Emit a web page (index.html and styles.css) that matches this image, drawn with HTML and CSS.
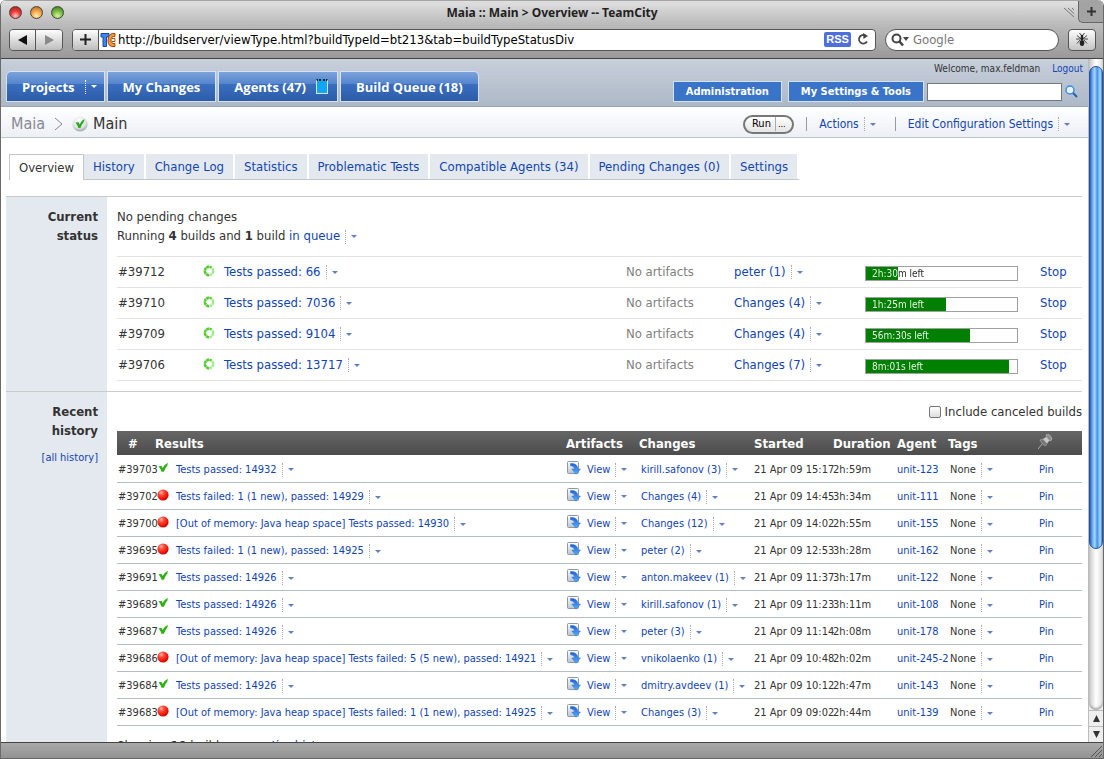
FILE: index.html
```
<!DOCTYPE html>
<html lang="en">
<head>
<meta charset="utf-8">
<title>Maia :: Main &gt; Overview -- TeamCity</title>
<link rel="stylesheet" href="styles.css">
</head>
<body>
<svg class="sprite" width="0" height="0" aria-hidden="true">
  <defs>
    <radialGradient id="red-ball" cx="35%" cy="28%" r="75%"><stop offset="0" stop-color="#ffb3a6"/><stop offset=".35" stop-color="#ff4a38"/><stop offset=".75" stop-color="#ee1408"/><stop offset="1" stop-color="#b80d04"/></radialGradient>
    <linearGradient id="blue-arrow" x1="0" y1="0" x2="0" y2="1"><stop offset="0" stop-color="#1c5fd0"/><stop offset="1" stop-color="#58b4ff"/></linearGradient>
    <linearGradient id="sheet" x1="0" y1="0" x2="0" y2="1"><stop offset="0" stop-color="#ffffff"/><stop offset="1" stop-color="#b9c3d2"/></linearGradient>
    <radialGradient id="badge" cx="45%" cy="30%" r="75%"><stop offset="0" stop-color="#ffffff"/><stop offset=".6" stop-color="#dfe4e4"/><stop offset="1" stop-color="#8f9a9a"/></radialGradient>
  </defs>
  <symbol id="ok" viewBox="0 0 12 12"><path d="M1.500 4.300 4.600 4 5.600 6Q7.400 2.600 10.800 .8L10.400 3.400Q8 6 6.900 9.800L4.600 9.800Q3.600 6.800 1.500 4.300Z" fill="#2bb410"/></symbol>
  <symbol id="fail" viewBox="0 0 12 12"><circle cx="6" cy="6" r="5.600" fill="url(#red-ball)"/></symbol>
  <symbol id="spin" viewBox="0 0 12 12"><circle cx="6" cy="6" r="4.200" fill="none" stroke="#a3e78f" stroke-width="2.400" stroke-dasharray="2.800 .5"/><path d="M6 10.200A4.200 4.200 0 1 1 8.400 2.500" fill="none" stroke="#55cc33" stroke-width="2.400" stroke-dasharray="2.800 .5"/></symbol>
  <symbol id="art" viewBox="0 0 14 14"><rect x=".5" y=".5" width="11" height="12" rx="1" fill="url(#sheet)" stroke="#8c97a8"/><path d="M3.500 2.500Q10.500 2 10.800 8H13.500L9 13.200 4.800 8H7.500Q7.500 5 3.500 4.800Z" fill="url(#blue-arrow)" stroke="#2b6bd0" stroke-width=".5"/></symbol>
</svg>
<div class="window">
  <header class="titlebar">
    <div class="lights"><i class="light red"></i><i class="light amber"></i><i class="light green"></i></div>
    <div class="window-title">Maia :: Main &gt; Overview -- TeamCity</div>
    <div class="tab-tools">
      <svg width="11" height="11" viewBox="0 0 11 11"><path d="M0 1 10 10M4 1 10 6.500M8 1 10 3" stroke="#777" fill="none"/></svg>
      <button class="new-tab" aria-label="New tab"><svg width="9" height="9" viewBox="0 0 9 9"><path d="M4.500 0V9M0 4.500H9" stroke="#333" stroke-width="2"/></svg></button>
    </div>
  </header>
  <div class="toolbar">
    <div class="nav-buttons">
      <button aria-label="Back"><svg width="9" height="10" viewBox="0 0 9 10"><path d="M9 0V10L0 5Z" fill="#111"/></svg></button>
      <button aria-label="Forward"><svg width="9" height="10" viewBox="0 0 9 10"><path d="M0 0V10L9 5Z" fill="#8a8a8a"/></svg></button>
    </div>
    <div class="address">
      <button class="add" aria-label="Add bookmark"><svg width="11" height="11" viewBox="0 0 11 11"><path d="M5.500 0V11M0 5.500H11" stroke="#222" stroke-width="2"/></svg></button>
      <svg class="site" width="16" height="16" viewBox="0 0 16 16"><path d="M1 1.500H9V5H6.500V14.500H3V5H1Z" fill="#3d86ee" stroke="#164aa8"/><path d="M15 4.500V1.500Q8.500.5 8 8T15 14.500V11.500Q11 12 11 8T15 4.500Z" fill="#f79a35" stroke="#a34810"/><path d="M12 6.500H15V9.500H12" fill="none" stroke="#b04d12"/></svg>
      <input class="url" type="text" aria-label="Address" value="http://buildserver/viewType.html?buildTypeId=bt213&amp;tab=buildTypeStatusDiv">
      <button class="rss">RSS</button>
      <button class="reload" aria-label="Reload"><svg width="12" height="13" viewBox="0 0 12 13"><path d="M8.500 2.500A4.300 4.300 0 1 0 10 8.500" fill="none" stroke="#444" stroke-width="1.800"/><path d="M6 0 11 3 6.500 6Z" fill="#444"/></svg></button>
    </div>
    <div class="web-search">
      <svg width="18" height="14" viewBox="0 0 18 14"><circle cx="5.500" cy="5.500" r="4" fill="none" stroke="#444" stroke-width="2"/><path d="M8.500 8.500 12 12.500" stroke="#444" stroke-width="2.500"/><path d="M12 4H18L15 8Z" fill="#444"/></svg>
      <input type="text" aria-label="Web search" placeholder="Google">
    </div>
    <button class="bug" aria-label="Report bug"><svg width="14" height="14" viewBox="0 0 14 14"><ellipse cx="7" cy="10" rx="2.300" ry="3" fill="#222"/><circle cx="7" cy="5.500" r="1.800" fill="#222"/><circle cx="7" cy="3" r="1.300" fill="#222"/><path d="M6 2 4.500 0M8 2 9.500 0M5 5 2 2.500M9 5 12 2.500M5 6H1M9 6H13M5 7 2 10.500M9 7 12 10.500" stroke="#333" stroke-width=".9"/></svg></button>
  </div>

  <div class="viewport">
    <div class="page">
      <div class="masthead">
        <nav class="main-tabs">
          <a href="#">Projects <span class="caret light-caret"></span></a>
          <a href="#">My Changes</a>
          <a href="#">Agents (47) <span class="agent-meter"></span></a>
          <a href="#">Build Queue (18)</a>
        </nav>
        <div class="account">
          <div class="welcome"><span>Welcome, max.feldman</span><a href="#">Logout</a></div>
          <div class="tools">
            <a class="tool" href="#">Administration</a>
            <a class="tool" href="#">My Settings &amp; Tools</a>
            <input type="text" aria-label="Search builds">
            <button class="go" aria-label="Search"><svg width="13" height="13" viewBox="0 0 13 13"><circle cx="5" cy="5" r="4" fill="#e4f2ff" stroke="#3a8de0" stroke-width="1.500"/><path d="M8 8 12 12" stroke="#2b5fa8" stroke-width="2"/></svg></button>
          </div>
        </div>
      </div>

      <div class="crumbs">
        <a class="parent" href="#">Maia</a>
        <svg width="9" height="14" viewBox="0 0 9 14"><path d="M1 1 8 7 1 13" fill="none" stroke="#888"/></svg>
        <svg width="16" height="16" viewBox="0 0 16 16"><circle cx="8" cy="8" r="7.600" fill="url(#badge)"/><path d="M3.500 6.500 6.500 6.200 7.500 8.600Q9.500 4.500 12.500 3L12 5.500Q9.500 8.500 8.500 12H6.500Q5.500 9 3.500 6.500Z" fill="#25a810"/></svg>
        <h1>Main</h1>
        <div class="actions">
          <div class="run"><button>Run</button><button class="more">...</button></div>
          <span class="sep"></span>
          <span class="drop"><a href="#">Actions</a><button class="caret" aria-label="Actions menu"></button></span>
          <span class="sep"></span>
          <span class="drop"><a href="#">Edit Configuration Settings</a><button class="caret" aria-label="Settings menu"></button></span>
        </div>
      </div>

      <nav class="tabs">
        <a class="current" href="#">Overview</a><a href="#">History</a><a href="#">Change Log</a><a href="#">Statistics</a><a href="#">Problematic Tests</a><a href="#">Compatible Agents (34)</a><a href="#">Pending Changes (0)</a><a href="#">Settings</a>
      </nav>

      <section class="block">
        <div class="side"><h2>Current status</h2></div>
        <div class="body">
          <p>No pending changes</p>
          <p>Running <b>4</b> builds and <b>1</b> build <a href="#">in queue</a><button class="caret" aria-label="Queue"></button></p>
          <table class="running">
            <colgroup><col class="r-num"><col class="r-icon"><col><col class="r-art"><col class="r-chg"><col class="r-bar"><col class="r-stop"></colgroup>
            <tbody>
            <tr><td>#39712</td><td><svg class="ico"><use href="#spin"/></svg></td><td><a href="#">Tests passed: 66</a><button class="caret" aria-label="More"></button></td><td class="none">No artifacts</td><td><a href="#">peter (1)</a><button class="caret" aria-label="More"></button></td><td class="progress"><div class="bar" style="--done:21%"><span>2h:30m left</span></div></td><td><a href="#">Stop</a></td></tr>
            <tr><td>#39710</td><td><svg class="ico"><use href="#spin"/></svg></td><td><a href="#">Tests passed: 7036</a><button class="caret" aria-label="More"></button></td><td class="none">No artifacts</td><td><a href="#">Changes (4)</a><button class="caret" aria-label="More"></button></td><td class="progress"><div class="bar" style="--done:53%"><span>1h:25m left</span></div></td><td><a href="#">Stop</a></td></tr>
            <tr><td>#39709</td><td><svg class="ico"><use href="#spin"/></svg></td><td><a href="#">Tests passed: 9104</a><button class="caret" aria-label="More"></button></td><td class="none">No artifacts</td><td><a href="#">Changes (4)</a><button class="caret" aria-label="More"></button></td><td class="progress"><div class="bar" style="--done:69%"><span>56m:30s left</span></div></td><td><a href="#">Stop</a></td></tr>
            <tr><td>#39706</td><td><svg class="ico"><use href="#spin"/></svg></td><td><a href="#">Tests passed: 13717</a><button class="caret" aria-label="More"></button></td><td class="none">No artifacts</td><td><a href="#">Changes (7)</a><button class="caret" aria-label="More"></button></td><td class="progress"><div class="bar" style="--done:95%"><span>8m:01s left</span></div></td><td><a href="#">Stop</a></td></tr>
            </tbody>
          </table>
        </div>
      </section>

      <section class="block">
        <div class="side"><h2>Recent history</h2><a href="#">[all history]</a></div>
        <div class="body">
          <label class="canceled"><input type="checkbox">Include canceled builds</label>
          <table class="history">
            <colgroup><col class="h-num"><col><col class="h-art"><col class="h-chg"><col class="h-start"><col class="h-dur"><col class="h-agent"><col class="h-tags"><col class="h-pin"></colgroup>
            <thead><tr><th class="num">#</th><th>Results</th><th>Artifacts</th><th>Changes</th><th>Started</th><th>Duration</th><th>Agent</th><th>Tags</th><th><svg width="15" height="15" viewBox="0 0 15 15"><path d="M0 15 5 9" stroke="#aaa" stroke-width="1"/><path d="M2 6 5 5 9 9.500 7.500 12Q4 11 2 6Z" fill="#777" stroke="#aaa" stroke-width=".6"/><path d="M5 5 8 3 11.500 6.500 9 9.500Z" fill="#c9c9c9"/><path d="M8 1 9.500 0Q13 1 14 5L12.500 7Q9 6 8 1Z" fill="#8b8b8b" stroke="#ccc" stroke-width=".6"/></svg></th></tr></thead>
            <tbody>
            <tr><td>#39703</td><td><svg class="ico"><use href="#ok"/></svg><a href="#">Tests passed: 14932</a><button class="caret" aria-label="More"></button></td><td><svg class="art"><use href="#art"/></svg><a href="#">View</a><button class="caret" aria-label="More"></button></td><td><a href="#">kirill.safonov (3)</a><button class="caret" aria-label="More"></button></td><td>21 Apr 09 15:17</td><td>2h:59m</td><td><a href="#">unit-123</a></td><td>None<button class="caret" aria-label="More"></button></td><td><a href="#">Pin</a></td></tr>
            <tr><td>#39702</td><td><svg class="ico"><use href="#fail"/></svg><a href="#">Tests failed: 1 (1 new), passed: 14929</a><button class="caret" aria-label="More"></button></td><td><svg class="art"><use href="#art"/></svg><a href="#">View</a><button class="caret" aria-label="More"></button></td><td><a href="#">Changes (4)</a><button class="caret" aria-label="More"></button></td><td>21 Apr 09 14:45</td><td>3h:34m</td><td><a href="#">unit-111</a></td><td>None<button class="caret" aria-label="More"></button></td><td><a href="#">Pin</a></td></tr>
            <tr><td>#39700</td><td><svg class="ico"><use href="#fail"/></svg><a href="#">[Out of memory: Java heap space] Tests passed: 14930</a><button class="caret" aria-label="More"></button></td><td><svg class="art"><use href="#art"/></svg><a href="#">View</a><button class="caret" aria-label="More"></button></td><td><a href="#">Changes (12)</a><button class="caret" aria-label="More"></button></td><td>21 Apr 09 14:02</td><td>2h:55m</td><td><a href="#">unit-155</a></td><td>None<button class="caret" aria-label="More"></button></td><td><a href="#">Pin</a></td></tr>
            <tr><td>#39695</td><td><svg class="ico"><use href="#fail"/></svg><a href="#">Tests failed: 1 (1 new), passed: 14925</a><button class="caret" aria-label="More"></button></td><td><svg class="art"><use href="#art"/></svg><a href="#">View</a><button class="caret" aria-label="More"></button></td><td><a href="#">peter (2)</a><button class="caret" aria-label="More"></button></td><td>21 Apr 09 12:53</td><td>3h:28m</td><td><a href="#">unit-162</a></td><td>None<button class="caret" aria-label="More"></button></td><td><a href="#">Pin</a></td></tr>
            <tr><td>#39691</td><td><svg class="ico"><use href="#ok"/></svg><a href="#">Tests passed: 14926</a><button class="caret" aria-label="More"></button></td><td><svg class="art"><use href="#art"/></svg><a href="#">View</a><button class="caret" aria-label="More"></button></td><td><a href="#">anton.makeev (1)</a><button class="caret" aria-label="More"></button></td><td>21 Apr 09 11:37</td><td>3h:17m</td><td><a href="#">unit-122</a></td><td>None<button class="caret" aria-label="More"></button></td><td><a href="#">Pin</a></td></tr>
            <tr><td>#39689</td><td><svg class="ico"><use href="#ok"/></svg><a href="#">Tests passed: 14926</a><button class="caret" aria-label="More"></button></td><td><svg class="art"><use href="#art"/></svg><a href="#">View</a><button class="caret" aria-label="More"></button></td><td><a href="#">kirill.safonov (1)</a><button class="caret" aria-label="More"></button></td><td>21 Apr 09 11:23</td><td>3h:11m</td><td><a href="#">unit-108</a></td><td>None<button class="caret" aria-label="More"></button></td><td><a href="#">Pin</a></td></tr>
            <tr><td>#39687</td><td><svg class="ico"><use href="#ok"/></svg><a href="#">Tests passed: 14926</a><button class="caret" aria-label="More"></button></td><td><svg class="art"><use href="#art"/></svg><a href="#">View</a><button class="caret" aria-label="More"></button></td><td><a href="#">peter (3)</a><button class="caret" aria-label="More"></button></td><td>21 Apr 09 11:14</td><td>2h:08m</td><td><a href="#">unit-178</a></td><td>None<button class="caret" aria-label="More"></button></td><td><a href="#">Pin</a></td></tr>
            <tr><td>#39686</td><td><svg class="ico"><use href="#fail"/></svg><a href="#">[Out of memory: Java heap space] Tests failed: 5 (5 new), passed: 14921</a><button class="caret" aria-label="More"></button></td><td><svg class="art"><use href="#art"/></svg><a href="#">View</a><button class="caret" aria-label="More"></button></td><td><a href="#">vnikolaenko (1)</a><button class="caret" aria-label="More"></button></td><td>21 Apr 09 10:48</td><td>2h:02m</td><td><a href="#">unit-245-2</a></td><td>None<button class="caret" aria-label="More"></button></td><td><a href="#">Pin</a></td></tr>
            <tr><td>#39684</td><td><svg class="ico"><use href="#ok"/></svg><a href="#">Tests passed: 14926</a><button class="caret" aria-label="More"></button></td><td><svg class="art"><use href="#art"/></svg><a href="#">View</a><button class="caret" aria-label="More"></button></td><td><a href="#">dmitry.avdeev (1)</a><button class="caret" aria-label="More"></button></td><td>21 Apr 09 10:12</td><td>2h:47m</td><td><a href="#">unit-143</a></td><td>None<button class="caret" aria-label="More"></button></td><td><a href="#">Pin</a></td></tr>
            <tr><td>#39683</td><td><svg class="ico"><use href="#fail"/></svg><a href="#">[Out of memory: Java heap space] Tests failed: 1 (1 new), passed: 14925</a><button class="caret" aria-label="More"></button></td><td><svg class="art"><use href="#art"/></svg><a href="#">View</a><button class="caret" aria-label="More"></button></td><td><a href="#">Changes (3)</a><button class="caret" aria-label="More"></button></td><td>21 Apr 09 09:02</td><td>2h:44m</td><td><a href="#">unit-139</a></td><td>None<button class="caret" aria-label="More"></button></td><td><a href="#">Pin</a></td></tr>
            </tbody>
          </table>
          <p class="summary">Showing <b>10</b> builds, see <a href="#">entire history</a></p>
        </div>
      </section>
    </div>
    <div class="scrollbar">
      <div class="track"><div class="thumb"></div></div>
      <button aria-label="Scroll up"><svg width="7" height="7" viewBox="0 0 7 7"><path d="M0 7H7L3.500 0Z" fill="#333"/></svg></button>
      <button aria-label="Scroll down"><svg width="7" height="7" viewBox="0 0 7 7"><path d="M0 0H7L3.500 7Z" fill="#333"/></svg></button>
    </div>
  </div>
  <footer class="statusbar"><svg width="13" height="13" viewBox="0 0 13 13"><path d="M1 12 12 1M5 12 12 5M9 12 12 9" stroke="#555"/></svg></footer>
</div>
</body>
</html>
```
FILE: styles.css
```
:root {
  --ui: "DejaVu Sans Condensed", "DejaVu Sans", Tahoma, sans-serif;
  --link: #1144b5;
}
* { box-sizing: border-box; }
body { margin: 0; font: 13px/19px var(--ui); color: #333; background: #fff; }
a { color: var(--link); text-decoration: none; }
button { padding: 0; border: 0; background: none; font: inherit; color: inherit; }
h1, h2, p { margin: 0; }
svg { flex: none; }
.sprite { display: block; position: absolute; }

.window { display: flex; flex-direction: column; height: 100vh; overflow: hidden; border: solid #6a6a6a; border-width: 0 1px; border-radius: 6px 6px 0 0; background: #fff; }

/* Browser frame */
.titlebar { display: grid; grid-template-columns: 1fr auto 1fr; align-items: center; height: 24px; border-top: 1px solid #a5a5a5; background: linear-gradient(#e0e0e0, #bbb); }
.lights { display: flex; gap: 8px; padding-left: 8px; }
.light { width: 13px; height: 13px; border-radius: 50%; border: 1px solid #444; }
.red { background: radial-gradient(circle at 50% 80%, #ffc9c0, #ee3b3b 45%, #a31519); }
.amber { background: radial-gradient(circle at 50% 80%, #fff0a8, #f5a94a 45%, #a8601c); }
.green { background: radial-gradient(circle at 50% 80%, #d9f7a0, #7cbf45 45%, #37731c); }
.window-title { font: bold 12px/16px "Noto Sans", sans-serif; color: #222; }
.tab-tools { display: flex; justify-content: flex-end; align-items: center; gap: 3px; height: 100%; }
.new-tab { display: grid; place-items: center; align-self: flex-start; width: 25px; height: 22px; background: #a3a3a3; border: solid #666; border-width: 0 0 1px 1px; border-radius: 0 0 0 5px; }
.toolbar { display: flex; align-items: center; gap: 9px; height: 35px; padding: 0 7px 3px 8px; background: linear-gradient(#bbb, #999); border-bottom: 1px solid #444; }
.nav-buttons, .address, .web-search, .bug { display: flex; align-items: center; height: 22px; border: 1px solid #555; border-radius: 4px; }
.nav-buttons button { display: grid; place-items: center; width: 26px; height: 20px; background: linear-gradient(#fdfdfd, #bdbdbd); }
.nav-buttons button:first-child { border-right: 1px solid #555; border-radius: 3px 0 0 3px; }
.nav-buttons button:last-child { border-radius: 0 3px 3px 0; }
.address { flex: 1; background: #fff; padding-right: 6px; }
.address .add { display: grid; place-items: center; width: 26px; height: 20px; background: linear-gradient(#fdfdfd, #bdbdbd); border-right: 1px solid #555; border-radius: 3px 0 0 3px; }
.site { margin: 0 2px 0 1px; }
input[type="text"] { border: 0; outline: 0; padding: 0; min-width: 0; background: none; font: inherit; }
.url { flex: 1; color: #000; }
.rss { width: 27px; height: 15px; margin-right: 6px; border-radius: 2px; background: #4f6fdd; color: #fff; font: bold 11px/15px "Liberation Sans", Arial, sans-serif; }
.reload { display: grid; place-items: center; }
.web-search { width: 174px; padding: 0 8px 0 5px; gap: 4px; border-radius: 11px; background: #fff; }
.web-search input { flex: 1; }
.web-search input::placeholder { color: #777; opacity: 1; }
.bug { justify-content: center; width: 28px; background: linear-gradient(#fdfdfd, #c4c4c4); }
.statusbar { display: flex; justify-content: flex-end; align-items: flex-end; height: 17px; border-top: 1px solid #444; border-bottom: 1px solid #666; background: linear-gradient(#aaa, #929292); }

.viewport { display: flex; flex: 1; min-height: 0; }
.page { flex: 1; min-width: 0; overflow: hidden; }
.scrollbar { display: flex; flex-direction: column; width: 15px; border-left: 1px solid #bbb; background: #eee; }
.track { flex: 1; padding-top: 7px; border-radius: 0 0 7px 7px; background: linear-gradient(90deg, #c8c8c8, #fff 50%, #ddd); box-shadow: inset 0 -2px 2px #aaa; }
.thumb { height: 75%; border: 1px solid #1f52a8; border-radius: 7px; background: linear-gradient(90deg, #2463c4, #7db8f5 25%, #a8d6ff 40%, #4490e8 60%, #a5dcff 85%, #3d7fd0); }
.scrollbar button { display: grid; place-items: center; height: 16px; border-top: 1px solid #bbb; background: #eee; }

/* Dotted divider with a small menu arrow */
.caret { display: inline-flex; align-items: center; width: 11px; height: 14px; padding: 0 0 0 5px; margin-left: 5px; border-left: 1px dotted #aaa; vertical-align: middle; }
.caret::after { content: ""; width: 0; border: solid transparent; border-width: 3px 3px 0; border-top-color: #5f82bd; }
.light-caret { border-color: #fff; }
.light-caret::after { border-top-color: #fff; }

/* Header */
.masthead { display: flex; justify-content: space-between; height: 48px; padding: 0 4px 4px 5px; background: linear-gradient(#c7cfda, #adb8c7); border-bottom: 1px solid #9aa4b2; }
.main-tabs { display: flex; align-items: flex-end; gap: 2px; }
.main-tabs a { display: flex; align-items: center; height: 31px; padding: 0 15px; border: 1px solid #d5e2f3; background: linear-gradient(#7ba3dc, #5686ce 40%, #3a6fc0 42%, #2c5ca8); color: #fff; font: bold 13px/18px "Open Sans", sans-serif; }
.main-tabs a:first-child { border-top-left-radius: 5px; padding-right: 6px; }
.main-tabs a:last-child { border-top-right-radius: 5px; }
.main-tabs a:nth-child(3) { padding-right: 9px; }
.main-tabs .caret { margin-left: 10px; width: 13px; }
.agent-meter { width: 12px; height: 15px; margin-left: 10px; border: 1px solid #d5e2f3; border-top: 2px dotted #222; background: #11a7f8; }
.account { display: flex; flex-direction: column; justify-content: space-between; }
.welcome { display: flex; justify-content: flex-end; gap: 12px; padding: 3px 1px 0 0; font-size: 10px; line-height: 14px; }
.tools { display: flex; align-items: center; }
.tool { height: 21px; margin-right: 6px; padding: 0 12px; border: 1px solid #d5e2f3; background: #3a74c8; color: #fff; font: bold 11px/19px var(--ui); }
.tool:nth-child(2) { margin-right: 3px; }
.tools input[type="text"] { width: 135px; height: 18px; border: 1px solid #777; background: #fff; }
.go { display: grid; align-items: center; width: 22px; padding-left: 3px; }

.crumbs { display: flex; align-items: center; gap: 9px; height: 31px; padding: 4px 19px 0 10px; background: linear-gradient(#fff, #eceff5); border-bottom: 1px solid #bfc4cc; }
.crumbs h1, .parent { font: 16px/22px var(--ui); }
.parent { color: #858a93; }
.crumbs h1 { margin-left: -4px; color: #333; }
.actions { display: flex; align-items: center; margin-left: auto; font-size: 12px; }
.run { display: flex; align-items: center; justify-content: center; width: 51px; height: 19px; border: 2px solid #777; border-radius: 10px; background: linear-gradient(#fff, #e4e4e4); color: #000; font-size: 11px; line-height: 14px; }
.run .more { margin-left: 4px; padding-left: 2px; border-left: 1px solid #aaa; font-size: 9px; }
.sep { width: 1px; height: 14px; margin: 0 12px; background: #999; }
.drop { display: flex; align-items: center; }
.drop + .sep { margin: 0 12px 0 20px; }

.tabs { display: flex; width: max-content; margin: 16px 0 16px 8px; padding-right: 2px; border-bottom: 1px solid #c4c6c9; }
.tabs a { height: 25px; margin-right: 2px; padding: 0 9px; background: #e4e9ef; line-height: 25px; }
.tabs a:last-child { margin: 0; }
.tabs .current { height: 26px; margin: 0 0 -1px; border: 1px solid #c4c6c9; border-bottom: 0; background: #fff; color: #333; line-height: 26px; }

/* Sections */
.block { display: flex; margin: 0 6px 0 5px; border-top: 1px solid #c8cacc; }
.side { flex: none; width: 101px; padding: 10px 9px 0 24px; background: #e4e9f0; text-align: right; }
.side h2 { font: bold 13px/19px var(--ui); }
.side a { display: block; margin-top: 9px; font-size: 11px; line-height: 18px; }
.body { flex: 1; min-width: 0; padding: 10px 0 10px 10px; }
table { width: 100%; table-layout: fixed; border-collapse: collapse; }
td, th { padding: 0; white-space: nowrap; text-align: left; }
.running { margin-top: 11px; }
.running td { height: 31px; padding-bottom: 2px; border: solid #e3e3e3; border-width: 1px 0; }
.running td:first-child { padding-left: 1px; }
.running .progress { padding: 2px 0 0; }
.running .ico { margin-bottom: 3px; }
.r-num { width: 86px; } .r-icon { width: 21px; } .r-art { width: 108px; } .r-chg { width: 131px; } .r-bar { width: 175px; } .r-stop { width: 42px; }
.none { color: #808080; }
.ico { width: 12px; height: 12px; display: inline-block; vertical-align: middle; }
.bar { width: 153px; height: 15px; border: 1px solid #a0a0a0; background: linear-gradient(90deg, #008000 var(--done), #fff 0); }
.bar span { display: block; padding-left: 6px; background: linear-gradient(90deg, #fff var(--done), #222 0) text; color: transparent; font-size: 10px; line-height: 13px; }

.canceled { display: flex; align-items: center; justify-content: flex-end; gap: 4px; height: 19px; }
.canceled input { appearance: none; width: 12px; height: 12px; margin: 0; border: 1px solid #777; border-radius: 2px; background: linear-gradient(#fff, #ddd); }
.history { margin-top: 10px; font-size: 11px; line-height: 17px; }
.history th { height: 24px; background: linear-gradient(#666, #4c4c4c); color: #fff; font: bold 13px/17px var(--ui); }
.history th svg { display: block; margin-bottom: 3px; }
.history .num { padding-left: 11px; }
.history td { height: 27px; padding-top: 2px; border-bottom: 1px solid #b5bcc4; }
.history td:first-child { padding-left: 1px; }
.history td:nth-child(2) { padding-left: 2px; }
.history td:nth-child(3) { padding-left: 1px; }
.history td:nth-child(4), .history td:nth-child(8) { padding-left: 2px; }
.history td:last-child { padding-left: 1px; }
.history .ico { margin-right: 7px; margin-bottom: 4px; }
.art { width: 14px; height: 14px; margin: 0 6px 3px 0; vertical-align: middle; }
.h-num { width: 38px; } .h-art { width: 73px; } .h-chg { width: 115px; } .h-start { width: 79px; } .h-dur { width: 64px; } .h-agent { width: 51px; } .h-tags { width: 90px; } .h-pin { width: 44px; }
.summary { margin-top: 10px; }
```
